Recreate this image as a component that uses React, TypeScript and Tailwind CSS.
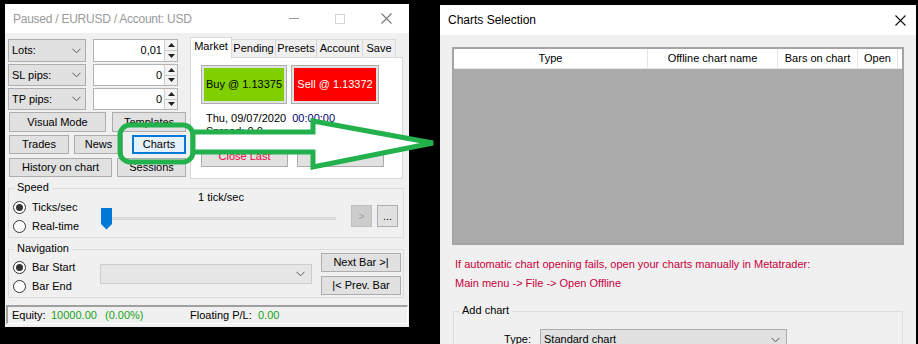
import React from "react";

const Chevron = () => (
  <svg width="9" height="6" viewBox="0 0 9 6" className="shrink-0">
    <path d="M0.5 0.8 L4.5 4.8 L8.5 0.8" fill="none" stroke="#555" strokeWidth="1" />
  </svg>
);

const Radio = ({ checked, label }: { checked?: boolean; label: string }) => (
  <div className="flex items-center h-[14px] gap-[6px]">
    <span className="w-[13px] h-[13px] rounded-full border border-[#333] bg-white flex items-center justify-center">
      {checked && <span className="w-[7px] h-[7px] rounded-full bg-[#333]" />}
    </span>
    <span>{label}</span>
  </div>
);

const Combo = ({ label }: { label: string }) => (
  <div className="w-[78px] h-full flex items-center justify-between border border-[#adadad] bg-[#e1e1e1] pl-[3px] pr-[4px]">
    <span>{label}</span>
    <Chevron />
  </div>
);

const Spin = ({ value }: { value: string }) => (
  <div className="w-[85px] h-full flex items-center border border-[#b4b4b4] bg-white">
    <span className="flex-1 text-right pr-[2px]">{value}</span>
    <div className="w-[13px] h-full flex flex-col border-l border-[#d0d0d0]">
      <div className="flex-1 flex items-center justify-center bg-[#f3f3f3] border-b border-[#c8c8c8]">
        <svg width="7" height="4" viewBox="0 0 7 4">
          <path d="M0 4 L3.5 0 L7 4 Z" fill="#222" />
        </svg>
      </div>
      <div className="flex-1 flex items-center justify-center bg-[#f3f3f3]">
        <svg width="7" height="4" viewBox="0 0 7 4">
          <path d="M0 0 L3.5 4 L7 0 Z" fill="#222" />
        </svg>
      </div>
    </div>
  </div>
);

function LeftWindow() {
  return (
    <div className="absolute left-[5px] top-[4px] w-[404px] h-[323px] flex flex-col">
      {/* title bar */}
      <div className="h-[29px] shrink-0 bg-white flex items-center pl-[8px] text-[12px] tracking-[-0.25px] text-[#999]">
        <span className="flex-1">Paused / EURUSD / Account: USD</span>
        <div className="flex items-center">
          <span className="w-[10px] h-px bg-[#999] mr-[36px]" />
          <span className="w-[10px] h-[10px] border border-[#d6d6d6] mr-[36px]" />
          <svg width="11" height="11" viewBox="0 0 11 11" className="mr-[17px]">
            <path d="M0.5 0.5 L10.5 10.5 M10.5 0.5 L0.5 10.5" stroke="#777" strokeWidth="1.1" />
          </svg>
        </div>
      </div>

      {/* body */}
      <div className="flex-1 flex flex-col bg-[#f0f0f0] pl-[3px]">
        <div className="flex gap-[4px]">
          {/* left column */}
          <div className="w-[178px] pt-[6px] flex flex-col">
            <div className="flex h-[23px] gap-[7px]">
              <Combo label="Lots:" />
              <Spin value="0,01" />
            </div>
            <div className="flex h-[22px] gap-[7px] mt-[2px]">
              <Combo label="SL pips:" />
              <Spin value="0" />
            </div>
            <div className="flex h-[22px] gap-[7px] mt-[2px]">
              <Combo label="TP pips:" />
              <Spin value="0" />
            </div>
            <div className="flex h-[20px] mt-[2px] ml-[1px] gap-[6px]">
              <div className="w-[97px] flex items-center justify-center border border-[#adadad] bg-[#e1e1e1]">Visual Mode</div>
              <div className="w-[74px] flex items-center justify-center border border-[#adadad] bg-[#e1e1e1]">Templates</div>
            </div>
            <div className="flex h-[19px] mt-[3px] ml-[1px]">
              <div className="w-[60px] flex items-center justify-center border border-[#adadad] bg-[#e1e1e1]">Trades</div>
              <div className="w-[49px] ml-[5px] flex items-center justify-center border border-[#adadad] bg-[#e1e1e1]">News</div>
              <div className="w-[54px] ml-[9px] flex items-center justify-center border-2 border-[#0078d7] bg-[#e5f1fb]">Charts</div>
            </div>
            <div className="flex h-[19px] mt-[4px] ml-[1px] gap-[5px]">
              <div className="w-[103px] flex items-center justify-center border border-[#adadad] bg-[#e1e1e1]">History on chart</div>
              <div className="w-[69px] flex items-center justify-center border border-[#adadad] bg-[#e1e1e1]">Sessions</div>
            </div>
          </div>

          {/* tabs */}
          <div className="w-[213px] pt-[4px] flex flex-col">
            <div className="flex items-end h-[20px] relative z-10">
              <div className="w-[42px] h-[21px] -mb-px bg-white border border-b-0 border-[#d9d9d9] flex items-center justify-center pb-[3px]">Market</div>
              <div className="w-[44px] h-[18px] bg-[#f0f0f0] border border-l-0 border-b-0 border-[#d9d9d9] flex items-center justify-center">Pending</div>
              <div className="w-[41px] h-[18px] bg-[#f0f0f0] border border-l-0 border-b-0 border-[#d9d9d9] flex items-center justify-center">Presets</div>
              <div className="w-[46px] h-[18px] bg-[#f0f0f0] border border-l-0 border-b-0 border-[#d9d9d9] flex items-center justify-center">Account</div>
              <div className="w-[33px] h-[18px] bg-[#f0f0f0] border border-l-0 border-b-0 border-[#d9d9d9] flex items-center justify-center">Save</div>
            </div>
            <div className="h-[122px] bg-white border border-[#d9d9d9] pl-[10px] pt-[7px] flex flex-col">
              <div className="flex h-[39px] gap-[4px]">
                <div className="w-[86px] border border-[#adadad] bg-[#e1e1e1] p-[2px] flex">
                  <div className="flex-1 bg-[#80d000] flex items-center justify-center text-black">Buy @ 1.13375</div>
                </div>
                <div className="w-[88px] border border-[#adadad] bg-[#e1e1e1] p-[2px] flex">
                  <div className="flex-1 bg-[#ff0000] flex items-center justify-center text-white">Sell @ 1.13372</div>
                </div>
              </div>
              <div className="mt-[7px] ml-[5px] leading-[14px] whitespace-pre">
                Thu, 09/07/2020  <span className="text-[#000070]">00:00:00</span>
              </div>
              <div className="ml-[5px] leading-[13px]">Spread: 0.0</div>
              <div className="flex h-[22px] mt-[7px] gap-[9px]">
                <div className="w-[87px] flex items-center justify-center border border-[#adadad] bg-[#e1e1e1] text-[#f0003c]">Close Last</div>
                <div className="w-[87px] flex items-center justify-center border border-[#adadad] bg-[#e1e1e1] text-[#f0003c]">Close All</div>
              </div>
            </div>
          </div>
        </div>

        {/* speed */}
        <div className="relative mt-[9px] w-[396px] h-[50px] border border-[#dcdcdc] flex">
          <span className="absolute left-[5px] -top-[8px] px-[3px] bg-[#f0f0f0] leading-[13px]">Speed</span>
          <div className="w-[91px] pl-[4px] pt-[11px] flex flex-col gap-[5px]">
            <Radio checked label="Ticks/sec" />
            <Radio label="Real-time" />
          </div>
          <div className="w-[238px] pt-[2px] flex flex-col">
            <div className="text-center leading-[12px] pl-[4px]">1 tick/sec</div>
            <div className="relative h-[22px] mt-[5px] ml-[3px] w-[233px]">
              <div className="absolute left-0 right-0 top-[9px] h-[3px] bg-[#e2e2e2] border-y border-[#d4d4d4]" />
              <svg width="11" height="22" viewBox="0 0 11 22" className="absolute -left-[2px] top-0">
                <path d="M0 0 H11 V16 L5.5 21.5 L0 16 Z" fill="#0078d7" />
              </svg>
            </div>
          </div>
          <div className="flex pt-[16px] gap-[5px] ml-[13px]">
            <div className="w-[21px] h-[22px] flex items-center justify-center border border-[#bfbfbf] bg-[#cccccc] text-[#a0a0a0]">&gt;</div>
            <div className="w-[21px] h-[22px] flex items-center justify-center border border-[#adadad] bg-[#e1e1e1]">...</div>
          </div>
        </div>

        {/* navigation */}
        <div className="relative mt-[11px] w-[396px] h-[49px] border border-[#dcdcdc] flex">
          <span className="absolute left-[5px] -top-[8px] px-[3px] bg-[#f0f0f0] leading-[13px]">Navigation</span>
          <div className="w-[91px] pl-[4px] pt-[10px] flex flex-col gap-[5px]">
            <Radio checked label="Bar Start" />
            <Radio label="Bar End" />
          </div>
          <div className="pt-[14px]">
            <div className="w-[212px] h-[20px] border border-[#cccccc] bg-[#e6e6e6] flex items-center justify-end pr-[6px]">
              <Chevron />
            </div>
          </div>
          <div className="ml-[9px] pt-[3px] flex flex-col gap-[4px]">
            <div className="w-[80px] h-[19px] flex items-center justify-center border border-[#adadad] bg-[#e1e1e1]">Next Bar &gt;|</div>
            <div className="w-[80px] h-[19px] flex items-center justify-center border border-[#adadad] bg-[#e1e1e1]">|&lt; Prev. Bar</div>
          </div>
        </div>

        {/* status bar */}
        <div className="mt-[7px] -ml-[2px] w-[402px] h-[19px] border-t-2 border-l-2 border-b border-r border-t-[#a0a0a0] border-l-[#a0a0a0] border-b-white border-r-white flex items-center pl-[4px]">
          <span className="w-[39px]">Equity:</span>
          <span className="w-[54px] text-[#16a316]">10000.00</span>
          <span className="w-[85px] text-[#16a316]">(0.00%)</span>
          <span className="w-[68px]">Floating P/L:</span>
          <span className="text-[#16a316]">0.00</span>
        </div>
      </div>
    </div>
  );
}

function RightWindow() {
  return (
    <div className="absolute left-[440px] top-[5px] w-[476px] h-[339px] flex flex-col overflow-hidden">
      <div className="h-[30px] shrink-0 bg-white flex items-center pl-[8px] pr-[10px] text-[12px]">
        <span className="flex-1">Charts Selection</span>
        <svg width="11" height="11" viewBox="0 0 11 11">
          <path d="M0.5 0.5 L10.5 10.5 M10.5 0.5 L0.5 10.5" stroke="#111" strokeWidth="1.1" />
        </svg>
      </div>
      <div className="flex-1 shrink-0 bg-[#f0f0f0] px-[12px] pt-[12px] flex flex-col">
        <div className="w-[452px] h-[198px] shrink-0 border-2 border-[#a4a4a4] bg-[#ababab] flex flex-col">
          <div className="h-[20px] bg-white border-b border-[#e5e5e5] flex">
            <div className="w-[194px] flex items-center justify-center border-r border-[#e5e5e5]">Type</div>
            <div className="w-[130px] flex items-center justify-center border-r border-[#e5e5e5]">Offline chart name</div>
            <div className="w-[80px] flex items-center justify-center border-r border-[#e5e5e5]">Bars on chart</div>
            <div className="w-[40px] flex items-center justify-center border-r border-[#e5e5e5]">Open</div>
          </div>
        </div>
        <div className="mt-[10px] pl-[3px] text-[#c8003c] leading-[19px] shrink-0">
          <div>If automatic chart opening fails, open your charts manually in Metatrader:</div>
          <div>Main menu -&gt; File -&gt; Open Offline</div>
        </div>
        <div className="relative mt-[18px] ml-[1px] w-[450px] h-[60px] shrink-0 border border-[#dcdcdc] flex">
          <span className="absolute left-[5px] -top-[8px] px-[3px] bg-[#f0f0f0] leading-[13px]">Add chart</span>
          <div className="flex items-start pt-[17px]">
            <span className="w-[77px] text-right leading-[20px]">Type:</span>
            <div className="ml-[9px] w-[247px] h-[21px] border border-[#adadad] bg-[#e1e1e1] flex items-center justify-between pl-[3px] pr-[6px]">
              <span>Standard chart</span>
              <Chevron />
            </div>
          </div>
        </div>
      </div>
    </div>
  );
}

export default function App() {
  return (
    <div className="relative w-[918px] h-[344px] bg-black overflow-hidden font-['Liberation_Sans',Arial,sans-serif] text-[11px] text-black">
      <LeftWindow />
      <RightWindow />
      <svg width="918" height="344" className="absolute left-0 top-0 pointer-events-none">
        <rect x="120" y="125" width="73" height="37" rx="10" fill="none" stroke="#22b14c" strokeWidth="5" />
        <polygon
          points="193,132 313,132 313,121 433,143 313,167 313,152 193,152"
          fill="white"
          stroke="#22b14c"
          strokeWidth="5"
          strokeLinejoin="miter"
        />
      </svg>
    </div>
  );
}
